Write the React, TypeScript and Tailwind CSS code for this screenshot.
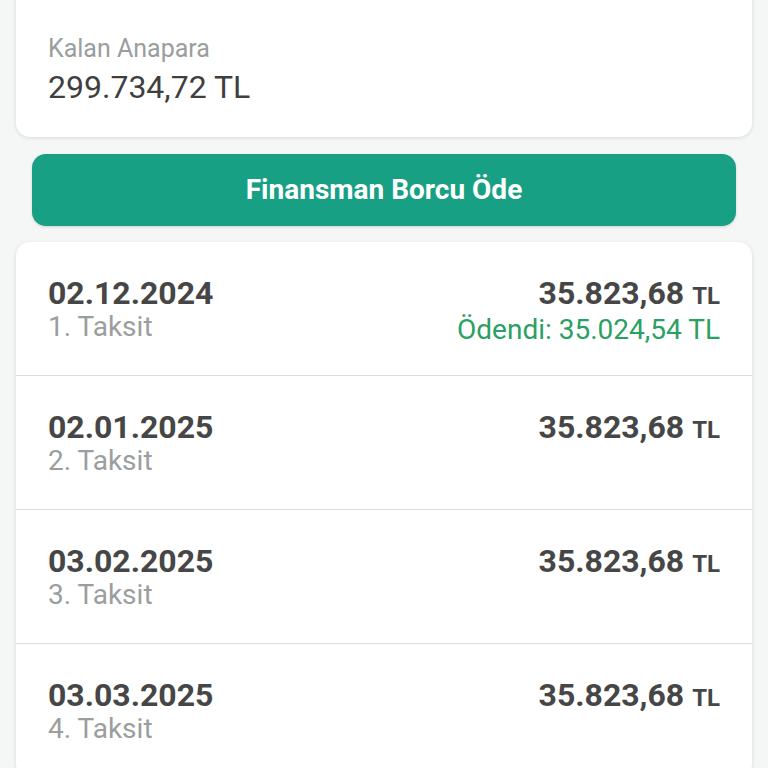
const rows = [
  { date: '02.12.2024', no: 1, paid: '35.024,54' },
  { date: '02.01.2025', no: 2 },
  { date: '03.02.2025', no: 3 },
  { date: '03.03.2025', no: 4 },
];

export default function App() {
  return (
    <div
      className="min-h-[768px] h-[768px] overflow-hidden bg-[#f4f7f6] px-4"
      style={{ fontFamily: 'Roboto, "Noto Sans", sans-serif' }}
    >
      <div className="-mt-[20px] rounded-[14px] bg-white px-8 pt-[53px] pb-[30px] shadow-[0_1px_4px_rgba(0,0,0,0.12)]">
        <p className="text-[25px] leading-[32px] text-[#9a9e9e]">Kalan Anapara</p>
        <p className="mt-[2px] text-[32px] leading-[40px] text-[#3f3f3f]">299.734,72 TL</p>
      </div>

      <button className="mx-4 mt-[17px] flex h-[72px] w-[704px] items-center justify-center rounded-[14px] bg-[#17a083] text-[28px] font-bold text-white shadow-[0_1px_3px_rgba(0,0,0,0.15)]">
        Finansman Borcu Öde
      </button>

      <div className="mt-[16px] overflow-hidden rounded-[14px] bg-white shadow-[0_1px_4px_rgba(0,0,0,0.12)]">
        {rows.map((r) => (
          <div
            key={r.no}
            className="flex h-[134px] items-start justify-between border-b-[1.5px] border-[#dcdcdc] px-8 pt-[31px]"
          >
            <div>
              <p className="text-[32px] font-bold leading-[40px] text-[#464646]">{r.date}</p>
              <p className="text-[28px] leading-[28px] text-[#9a9e9e]">{r.no}. Taksit</p>
            </div>
            <div className="text-right">
              <p className="text-[32px] font-bold leading-[40px] text-[#464646]">
                35.823,68 <span className="text-[24px]">TL</span>
              </p>
              {r.paid && (
                <p className="text-[28px] leading-[28px] text-[#2aa163]">Ödendi: {r.paid} TL</p>
              )}
            </div>
          </div>
        ))}
      </div>
    </div>
  );
}
